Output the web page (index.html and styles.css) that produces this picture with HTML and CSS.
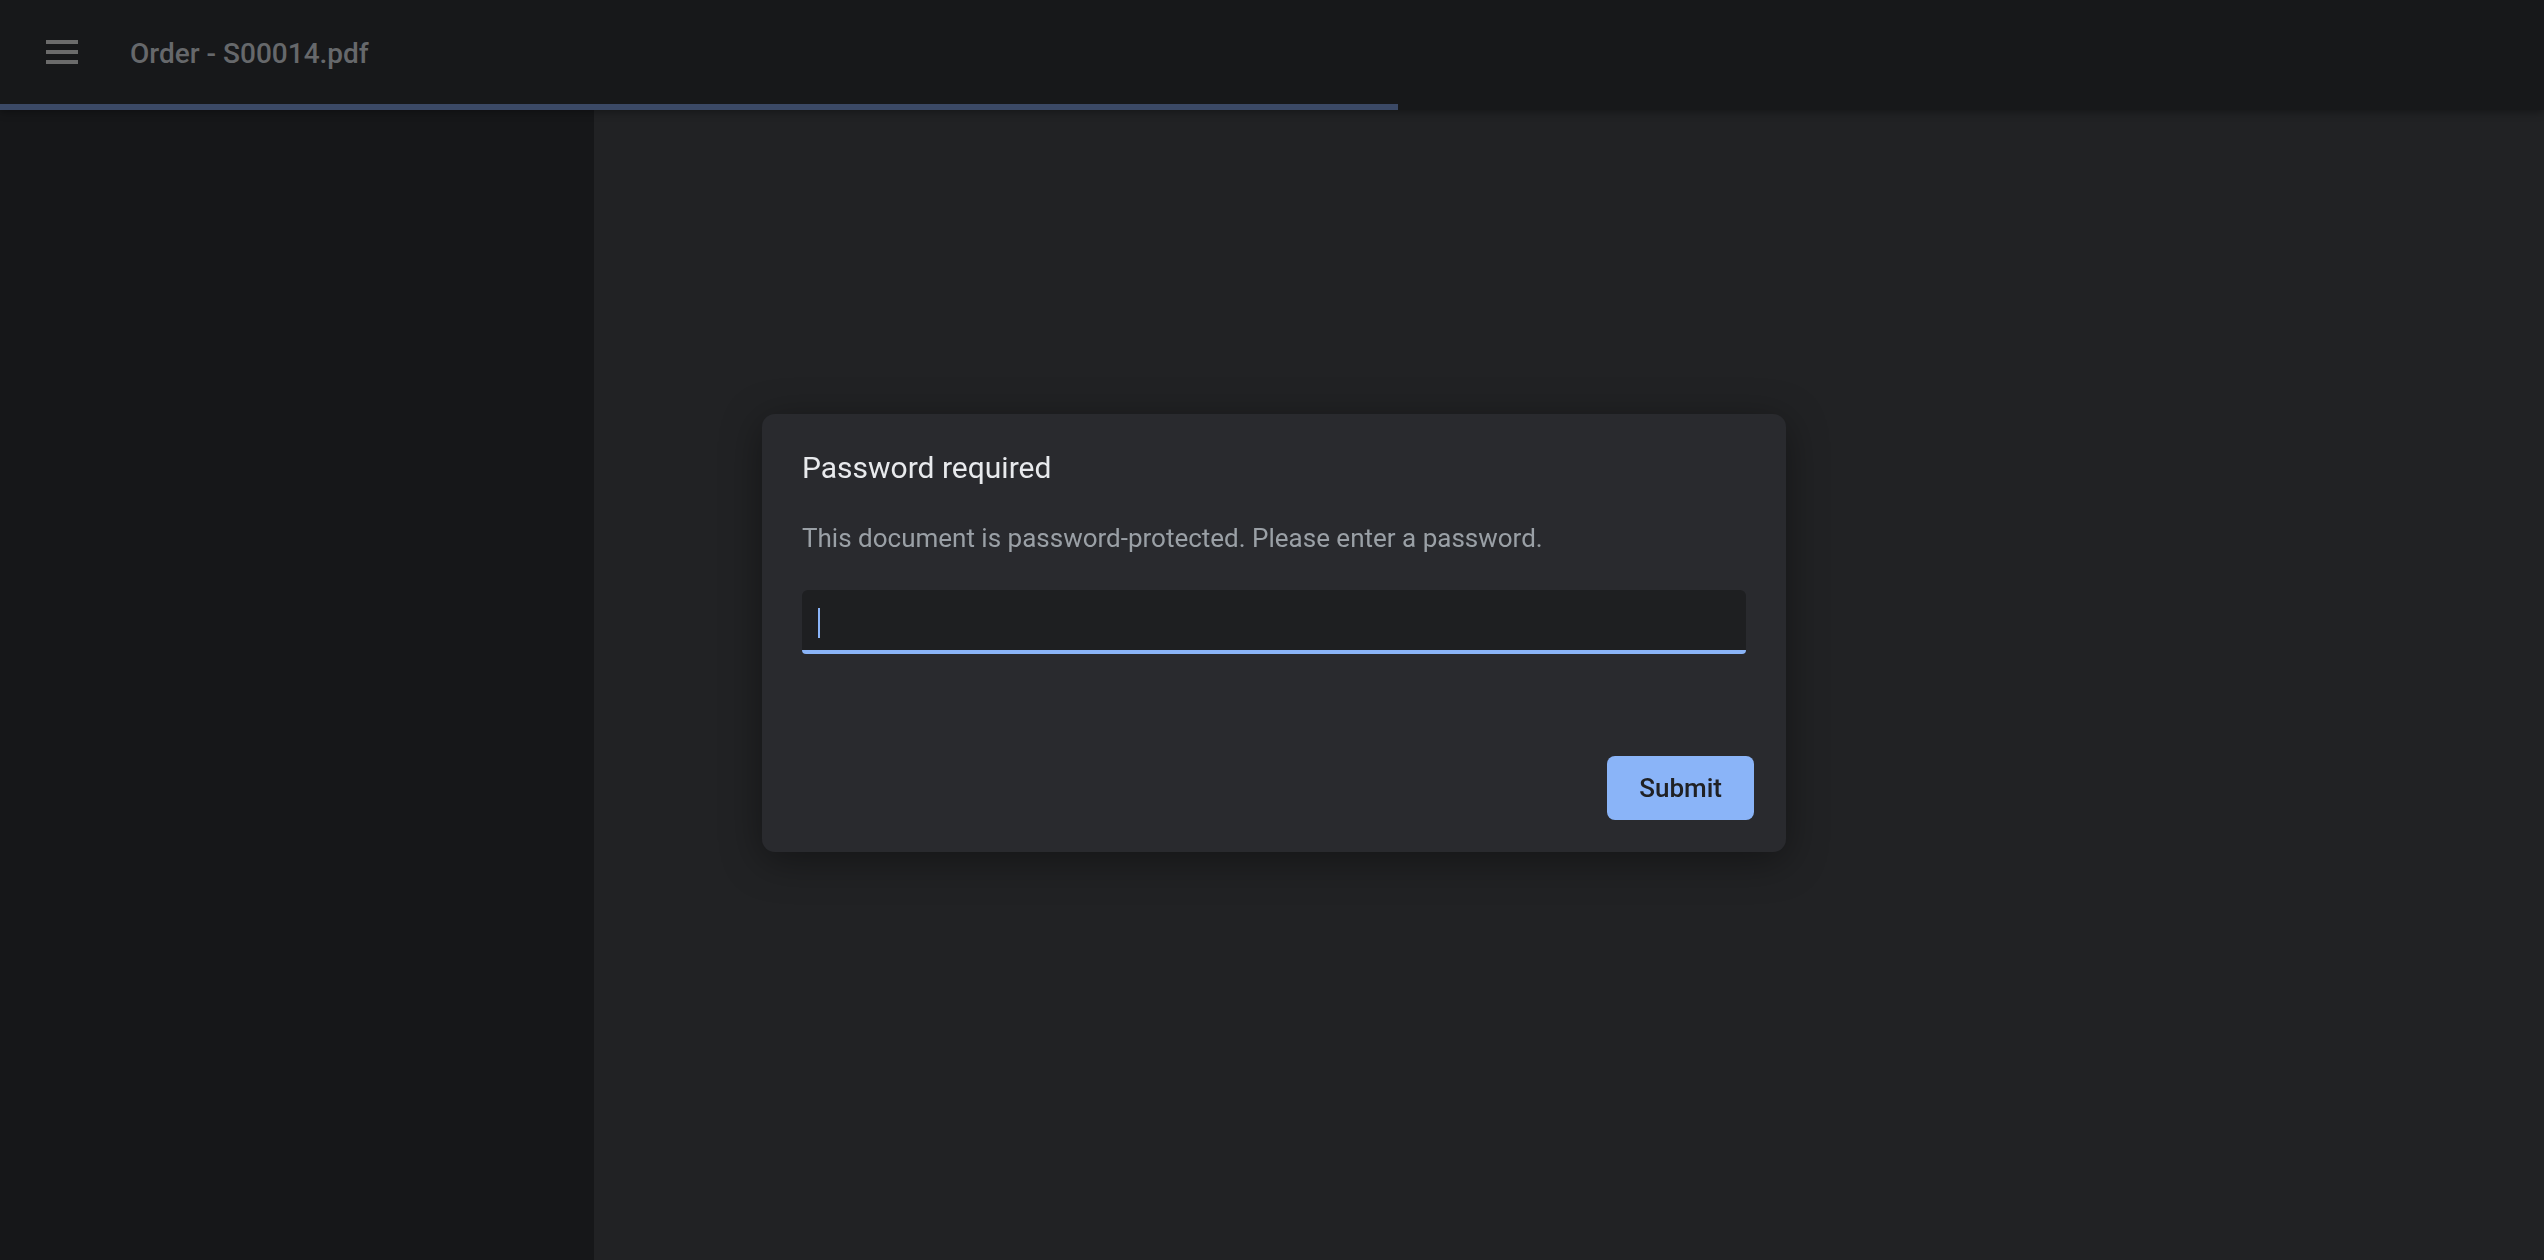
FILE: index.html
```html
<!DOCTYPE html>
<html lang="en">
<head>
    <meta charset="UTF-8">
    <meta name="viewport" content="width=device-width, initial-scale=1.0">
    <title>Order - S00014.pdf</title>
    <link rel="stylesheet" href="styles.css">
</head>
<body>
    <div class="toolbar">
        <div class="toolbar-row">
            <button class="menu-btn" aria-label="Menu">
                <svg width="32" height="24" viewBox="0 0 32 24">
                    <rect x="0" y="0" width="32" height="4" fill="#6b6b6b"/>
                    <rect x="0" y="10" width="32" height="4" fill="#6b6b6b"/>
                    <rect x="0" y="20" width="32" height="4" fill="#6b6b6b"/>
                </svg>
            </button>
            <span class="doc-title">Order - S00014.pdf</span>
        </div>
        <div class="progress"><div class="progress-bar"></div></div>
    </div>

    <div class="content">
        <div class="sidenav"></div>
        <div class="viewer"></div>
    </div>

    <div class="dialog">
        <div class="dialog-title">Password required</div>
        <div class="dialog-text">This document is password-protected. Please enter a password.</div>
        <label class="field">
            <input type="password" class="field-input" aria-label="Password">
            <span class="caret"></span>
        </label>
        <div class="dialog-actions">
            <button class="submit-btn">Submit</button>
        </div>
    </div>
</body>
</html>
```

FILE: styles.css
```css
body {
    margin: 0;
    font-family: Roboto, "Liberation Sans", sans-serif;
    background-color: #212224;
    height: 1260px;
    overflow: hidden;
    display: flex;
    flex-direction: column;
}

.toolbar {
    background-color: #17181a;
    position: relative;
    z-index: 1;
    box-shadow: 0 2px 8px rgba(0, 0, 0, 0.35);
}

.toolbar-row {
    height: 104px;
    display: flex;
    align-items: center;
    padding-left: 46px;
}

.menu-btn {
    background: none;
    border: none;
    padding: 0;
    width: 32px;
    height: 24px;
    display: flex;
    margin-right: 52px;
}

.doc-title {
    color: #66686b;
    font-size: 28px;
    font-weight: 500;
    margin-top: 3px;
}

.progress {
    height: 6px;
}

.progress-bar {
    width: 1398px;
    height: 100%;
    background-color: #3b4966;
}

.content {
    flex: 1;
    display: flex;
}

.sidenav {
    width: 594px;
    background-color: #161719;
}

.viewer {
    flex: 1;
    background-color: #212224;
}

/* password dialog, sits over the page */
.dialog {
    position: fixed;
    left: 762px;
    top: 414px;
    width: 1024px;
    box-sizing: border-box;
    padding: 36px 40px 32px;
    background-color: #292a2e;
    border-radius: 13px;
    box-shadow: 0 8px 40px rgba(0, 0, 0, 0.4);
    display: flex;
    flex-direction: column;
}

.dialog-title {
    color: #e8eaed;
    font-size: 30px;
    line-height: 36px;
}

.dialog-text {
    color: #9aa0a6;
    font-size: 26px;
    line-height: 36px;
    margin-top: 34px;
}

.field {
    position: relative;
    margin-top: 34px;
    display: block;
}

.field-input {
    display: block;
    width: 100%;
    box-sizing: border-box;
    height: 64px;
    background-color: #1e1f21;
    border: none;
    border-bottom: 4px solid #8ab4f8;
    border-radius: 6px 6px 4px 4px;
    outline: none;
    color: #e8eaed;
    font-size: 26px;
    padding: 0 16px;
    caret-color: transparent;
}

.caret {
    position: absolute;
    left: 16px;
    top: 18px;
    width: 2px;
    height: 30px;
    background-color: #8ab4f8;
}

.dialog-actions {
    display: flex;
    justify-content: flex-end;
    margin-top: 102px;
    margin-right: -8px;
}

.submit-btn {
    height: 64px;
    padding: 0 32px;
    background-color: #8ab4f8;
    color: #202124;
    border: none;
    border-radius: 8px;
    font-family: Roboto, "Liberation Sans", sans-serif;
    font-size: 26px;
    font-weight: 500;
}
```
